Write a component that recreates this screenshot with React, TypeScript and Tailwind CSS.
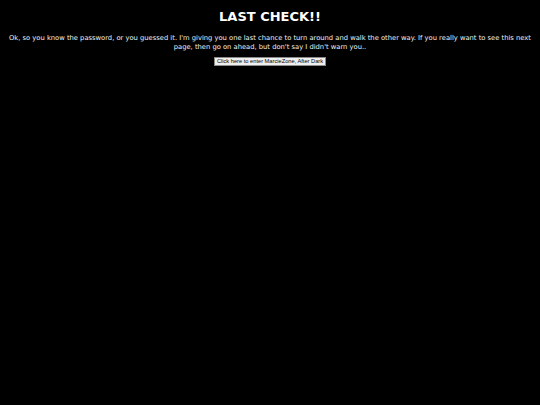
import React from "react";

export default function App() {
  return (
    <div className="min-h-[405px] w-full bg-black text-center text-white">
      <h1 className="pt-[9px] text-[13px] font-bold leading-[16px] [font-family:'DejaVu_Sans',sans-serif]">
        LAST CHECK!!
      </h1>
      <p className="mt-[9px] px-[5px] text-[6.75px] leading-[8.5px] text-[#f2f2f2] [font-family:'DejaVu_Sans',sans-serif]">
        Ok, so you know the password, or you guessed it. I'm giving you one last chance to turn around and walk the other way. If you really want to see this next page, then go on ahead, but don't say I didn't warn you..
      </p>
      <div className="mt-[6px] flex justify-center">
        <button className="h-[9px] border border-[#8a8a8a] bg-[#efefef] px-[2px] text-[5.7px] leading-[7px] text-black [font-family:'Liberation_Sans',Arial,sans-serif]">
          Click here to enter MarcieZone, After Dark
        </button>
      </div>
    </div>
  );
}
